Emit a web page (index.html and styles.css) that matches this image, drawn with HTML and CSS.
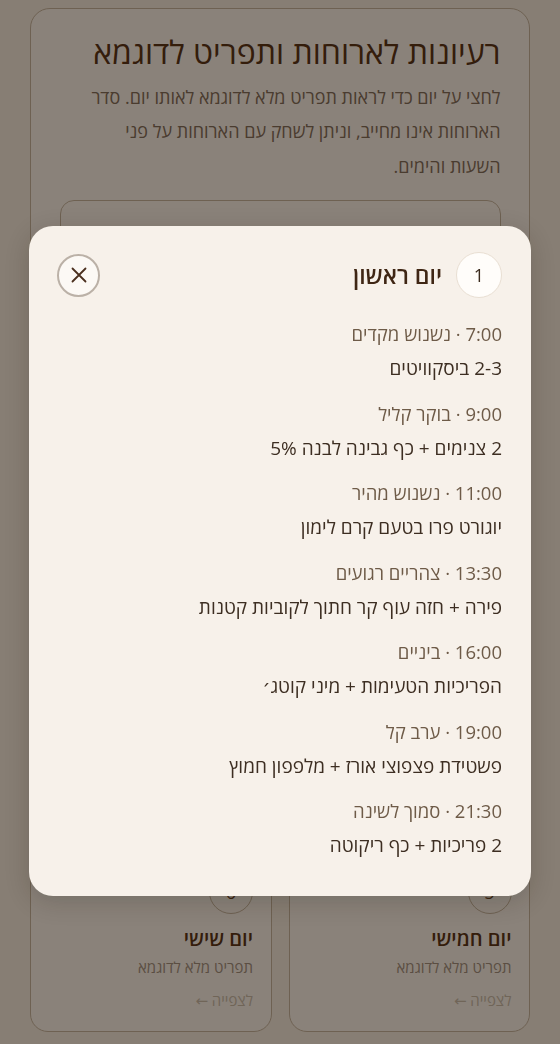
FILE: index.html
```html
<!DOCTYPE html>
<html lang="he" dir="rtl">
<head>
<meta charset="utf-8">
<title>רעיונות לארוחות ותפריט לדוגמא</title>
<link rel="stylesheet" href="styles.css">
</head>
<body>
<main class="page">
  <section class="intro">
    <h1 class="intro-title">רעיונות לארוחות ותפריט לדוגמא</h1>
    <p class="intro-text">לחצי על יום כדי לראות תפריט מלא לדוגמא לאותו יום. סדר הארוחות אינו מחייב, וניתן לשחק עם הארוחות על פני<br>השעות והימים.</p>
    <div class="tips">
      <p class="tip">כלל לילה: לא לדלג על ארוחות, לאכול לאט ולשתות הרבה לאורך היום</p>
      <p class="tip">מומלץ לשלב חלבון בכל ארוחה קטנה</p>
      <p class="tip">אפשר להחליף ארוחות בין הימים</p>
      <p class="tip">כדאי להכין מראש נשנושים ליום למחרת</p>
    </div>
  </section>

  <section class="days">
    <a class="day-card"><span class="day-num">1</span><h2 class="day-title">יום ראשון</h2><p class="day-sub">תפריט מלא לדוגמא</p><p class="day-link">לצפייה ←</p></a>
    <a class="day-card"><span class="day-num">2</span><h2 class="day-title">יום שני</h2><p class="day-sub">תפריט מלא לדוגמא</p><p class="day-link">לצפייה ←</p></a>
    <a class="day-card"><span class="day-num">3</span><h2 class="day-title">יום שלישי</h2><p class="day-sub">תפריט מלא לדוגמא</p><p class="day-link">לצפייה ←</p></a>
    <a class="day-card"><span class="day-num">4</span><h2 class="day-title">יום רביעי</h2><p class="day-sub">תפריט מלא לדוגמא</p><p class="day-link">לצפייה ←</p></a>
    <a class="day-card"><span class="day-num">5</span><h2 class="day-title">יום חמישי</h2><p class="day-sub">תפריט מלא לדוגמא</p><p class="day-link">לצפייה ←</p></a>
    <a class="day-card"><span class="day-num">6</span><h2 class="day-title">יום שישי</h2><p class="day-sub">תפריט מלא לדוגמא</p><p class="day-link">לצפייה ←</p></a>
  </section>
</main>

<div class="overlay"></div>

<div class="modal" role="dialog" aria-label="יום ראשון">
  <header class="modal-head">
    <span class="modal-num">1</span>
    <h2 class="modal-title">יום ראשון</h2>
    <button class="close" aria-label="סגירה">
      <svg width="18" height="18" viewBox="0 0 18 18" aria-hidden="true"><path d="M2.5 2.5 L15.5 15.5 M15.5 2.5 L2.5 15.5" stroke="#4a2f1e" stroke-width="1.8" stroke-linecap="round" fill="none"/></svg>
    </button>
  </header>
  <ul class="meals">
    <li class="meal"><p class="meal-time">7:00 · נשנוש מקדים</p><p class="meal-desc">2-3 ביסקוויטים</p></li>
    <li class="meal"><p class="meal-time">9:00 · בוקר קליל</p><p class="meal-desc">2 צנימים + כף גבינה לבנה 5%</p></li>
    <li class="meal"><p class="meal-time">11:00 · נשנוש מהיר</p><p class="meal-desc">יוגורט פרו בטעם קרם לימון</p></li>
    <li class="meal"><p class="meal-time">13:30 · צהריים רגועים</p><p class="meal-desc">פירה + חזה עוף קר חתוך לקוביות קטנות</p></li>
    <li class="meal"><p class="meal-time">16:00 · ביניים</p><p class="meal-desc">הפריכיות הטעימות + מיני קוטג׳</p></li>
    <li class="meal"><p class="meal-time">19:00 · ערב קל</p><p class="meal-desc">פשטידת פצפוצי אורז + מלפפון חמוץ</p></li>
    <li class="meal"><p class="meal-time">21:30 · סמוך לשינה</p><p class="meal-desc">2 פריכיות + כף ריקוטה</p></li>
  </ul>
</div>
</body>
</html>
```

FILE: styles.css
```css
* { box-sizing: border-box; }

html, body {
  margin: 0;
  padding: 0;
}

body {
  background: #f4ece2;
  font-family: "Open Sans", "DejaVu Sans", sans-serif;
  color: #4a3020;
  overflow: hidden;
  height: 1044px;
}

.page {
  padding: 8px 30px 0;
}

.intro {
  border: 1.5px solid #c3b39f;
  border-radius: 20px;
  background: #faf5ef;
  padding: 22.5px 28.5px 24.5px;
}

.intro-title {
  margin: 0;
  font-size: 32px;
  line-height: 40px;
  font-weight: 500;
  color: #4e2a10;
}

.intro-text {
  margin: 8px 0 0;
  font-size: 18px;
  line-height: 34.5px;
  color: #7a6858;
}

.tips {
  margin-top: 16.5px;
  height: 210px;
  border: 1.5px solid #c3b39f;
  border-radius: 14px;
  padding: 17px 20px;
  overflow: hidden;
}

.tip {
  margin: 0;
  font-size: 17px;
  line-height: 34px;
  color: #7f6d5e;
}

.days {
  margin-top: 17px;
  display: grid;
  grid-template-columns: 1fr 1fr;
  gap: 17px;
}

.day-card {
  display: flex;
  flex-direction: column;
  align-items: flex-start;
  height: 182px;
  border: 1.5px solid #c3b39f;
  border-radius: 18px;
  background: #faf5ef;
  padding: 18.5px 17.5px 0;
}

.day-num {
  width: 44px;
  height: 44px;
  border-radius: 50%;
  border: 1.5px solid #c3b39f;
  display: flex;
  align-items: center;
  justify-content: center;
  font-size: 18px;
  color: #5a361a;
}

.day-title {
  margin: 11px 0 0;
  font-size: 20px;
  line-height: 28px;
  font-weight: 600;
  color: #4e2a10;
}

.day-sub {
  margin: 2px 0 0;
  font-size: 15px;
  line-height: 24px;
  color: #9d8d7f;
}

.day-link {
  margin: 10px 0 0;
  font-size: 15px;
  line-height: 22px;
  color: #c6baab;
}

.overlay {
  position: fixed;
  inset: 0;
  background: rgba(25, 15, 5, 0.5);
}

.modal {
  position: fixed;
  top: 226px;
  left: 29px;
  width: 502px;
  background: #f7f1ea;
  border-radius: 24px;
  padding: 26px 29px 37px 28px;
  box-shadow: 0 6px 24px rgba(30, 20, 10, 0.18);
}

.modal-head {
  display: flex;
  align-items: center;
  height: 46px;
}

.modal-num {
  width: 46px;
  height: 46px;
  border-radius: 50%;
  background: #fffdfa;
  border: 1.5px solid #e9dfd3;
  display: flex;
  align-items: center;
  justify-content: center;
  font-size: 18px;
  color: #3a2a1c;
}

.modal-title {
  margin: 0 14px 0 0;
  font-size: 23px;
  font-weight: 600;
  color: #3f2614;
}

.close {
  margin-right: auto;
  width: 43px;
  height: 43px;
  border-radius: 50%;
  border: 2px solid #bbb1a7;
  background: #fcf9f5;
  display: flex;
  align-items: center;
  justify-content: center;
  padding: 0;
}

.meals {
  list-style: none;
  margin: 23px 0 0;
  padding: 0;
  display: flex;
  flex-direction: column;
  gap: 18.5px;
}

.meal-time {
  margin: 0;
  font-size: 18.5px;
  line-height: 26px;
  color: #6e5b48;
}

.meal-desc {
  margin: 8px 0 0;
  font-size: 19px;
  line-height: 27px;
  color: #3d2e22;
}
```
